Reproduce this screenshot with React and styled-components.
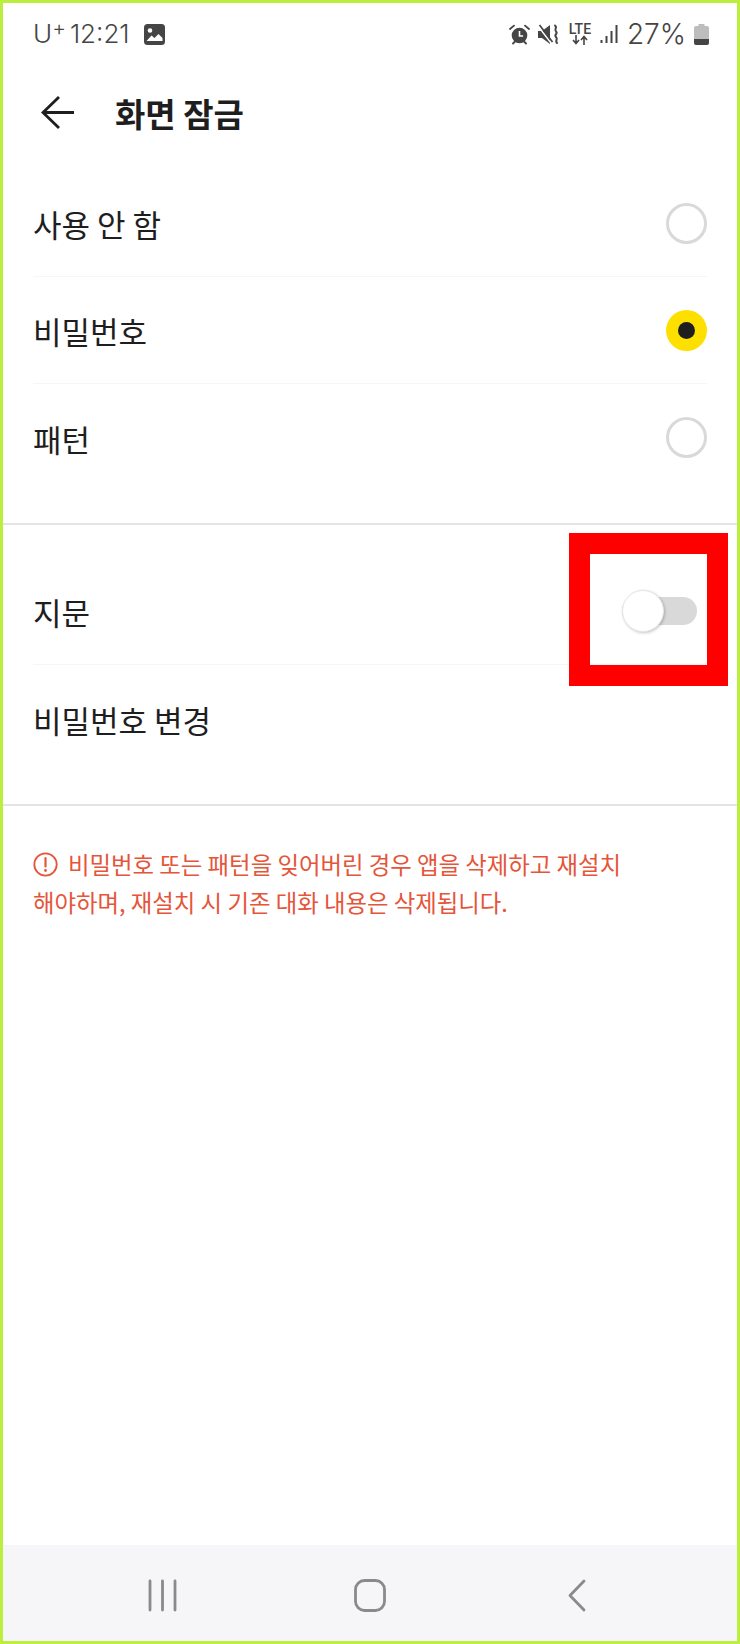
import React from 'react';
import styled, { createGlobalStyle } from 'styled-components';

const GlobalStyle = createGlobalStyle`
  html, body {
    margin: 0;
    padding: 0;
    background: #fff;
  }
  * {
    box-sizing: border-box;
  }
`;

const Screen = styled.div`
  position: relative;
  width: 740px;
  height: 1644px;
  display: flex;
  flex-direction: column;
  border: 3px solid #bbee3e;
  background: #fff;
  font-family: "Noto Sans CJK KR", "Noto Sans", sans-serif;
  color: #1e1e1e;
  overflow: hidden;
`;

const StatusBar = styled.div`
  height: 62px;
  padding: 0 28px 0 30px;
  display: flex;
  align-items: center;
  justify-content: space-between;
  font-family: Inter, Roboto, sans-serif;
  color: #454545;
`;

const StatusGroup = styled.div`
  display: flex;
  align-items: center;
  gap: ${(p) => p.$gap || 8}px;
`;

const StatusText = styled.span`
  font-size: ${(p) => p.$size || 26}px;
  font-weight: 300;
  line-height: 32px;
  white-space: nowrap;
`;

const Plus = styled.sup`
  font-size: 21px;
  line-height: 0;
  vertical-align: 8px;
  margin-right: 4px;
`;

const Header = styled.header`
  height: 105px;
  padding: 0 0 10px 38px;
  display: flex;
  align-items: center;
  gap: 40px;
`;

const Title = styled.h1`
  margin: 0;
  font-size: 33px;
  font-weight: 700;
  line-height: 40px;
`;

const Section = styled.section`
  padding: ${(p) => p.$top || 0}px 0 32px;
  border-bottom: 2px solid #e4e4e4;
`;

const Row = styled.div`
  height: 107px;
  margin: 0 30px;
  display: flex;
  align-items: center;
  justify-content: space-between;
  border-bottom: ${(p) => (p.$last ? '0' : '1px solid #f6f6f6')};
`;

const Label = styled.span`
  font-size: 31px;
  line-height: 40px;
  padding-top: 2px;
`;

const Radio = styled.span`
  width: 41px;
  height: 41px;
  border-radius: 50%;
  display: flex;
  align-items: center;
  justify-content: center;
  border: ${(p) => (p.$on ? '0' : '3px solid #d9d9d9')};
  background: ${(p) => (p.$on ? '#fde000' : '#fff')};
`;

const RadioDot = styled.span`
  width: 17px;
  height: 17px;
  border-radius: 50%;
  background: #1e1e1e;
`;

const Toggle = styled.span`
  position: relative;
  width: 75px;
  height: 28px;
  margin-right: 10px;
  border-radius: 14px;
  background: #d9d9d9;
  display: block;
`;

const Knob = styled.span`
  position: absolute;
  left: 0;
  top: -7px;
  width: 42px;
  height: 42px;
  border-radius: 50%;
  background: #fff;
  border: 1px solid #e6e6e6;
  box-shadow: 1px 1px 3px rgba(0, 0, 0, 0.22);
`;

const Highlight = styled.div`
  position: absolute;
  left: 566px;
  top: 530px;
  width: 159px;
  height: 153px;
  border: 21px solid #ff0000;
`;

const Warning = styled.p`
  margin: 0;
  padding: 39px 30px 0;
  font-size: 23.4px;
  line-height: 38px;
  color: #e5553a;
  flex: 1;
`;

const WarningIcon = styled.svg`
  width: 25px;
  height: 25px;
  margin-right: 10px;
  vertical-align: -3px;
`;

const NavBar = styled.nav`
  height: 96px;
  padding: 4px 56px 0;
  background: #f6f6f8;
  display: grid;
  grid-template-columns: repeat(3, 1fr);
  align-items: center;
  justify-items: center;
`;

function AlarmIcon() {
  return (
    <svg width="21" height="21" viewBox="0 0 21 21">
      <circle cx="10.5" cy="11.5" r="7.8" fill="#454545" />
      <path d="M10.5 7v5h3.6" fill="none" stroke="#fff" strokeWidth="1.6" />
      <path d="M1 5l4-3.4M20 5l-4-3.4M4 19.500l2-2M17 19.500l-2-2" stroke="#454545" strokeWidth="1.8" strokeLinecap="round" />
    </svg>
  );
}

function MuteIcon() {
  return (
    <svg width="22" height="21" viewBox="0 0 22 21">
      <path d="M0 7h4l8-6v19l-8-6H0z" fill="#454545" />
      <path d="M0 2l13 17" stroke="#fff" strokeWidth="1.400" />
      <path d="M1.500 1l13 17" stroke="#454545" strokeWidth="1.700" />
      <path d="M17 1.500c3 2.500-1.500 3.500 1 6s-2.500 3 0 5.500-1.500 3.500 1 6" fill="none" stroke="#454545" strokeWidth="2" strokeLinecap="round" />
    </svg>
  );
}

const LteBox = styled.span`
  width: 24px;
  display: flex;
  flex-direction: column;
  align-items: center;
  font-family: Roboto, sans-serif;
  font-size: 14px;
  font-weight: 500;
  line-height: 12px;
`;

function LteIcon() {
  return (
    <LteBox>
      LTE
      <svg width="18" height="10" viewBox="0 0 18 10">
        <path d="M5 0v8M2 5l3 3.500L8 5M13 10V2M10 5l3-3.500L16 5" fill="none" stroke="#454545" strokeWidth="1.600" />
      </svg>
    </LteBox>
  );
}

function SignalIcon() {
  return (
    <svg width="19" height="20" viewBox="0 0 19 20">
      <path d="M1.500 16v3M6.500 12v7M11.500 7v12M16.500 1v18" stroke="#454545" strokeWidth="2" />
    </svg>
  );
}

function BatteryIcon() {
  return (
    <svg width="15" height="21" viewBox="0 0 15 21">
      <path d="M4.500 0h6v2h2.500a2 2 0 0 1 2 2v11H0V4a2 2 0 0 1 2-2h2.500z" fill="#bdbdbd" />
      <path d="M0 15h15v4a2 2 0 0 1-2 2H2a2 2 0 0 1-2-2z" fill="#454545" />
    </svg>
  );
}

function ImageIcon() {
  return (
    <svg width="21" height="21" viewBox="0 0 21 21">
      <rect width="21" height="21" rx="3.500" fill="#454545" />
      <circle cx="6" cy="6.500" r="2.300" fill="#fff" />
      <path d="M2.500 17l5-5.500 3 2.500 4-4 4 4v3z" fill="#fff" />
    </svg>
  );
}

function BackArrow() {
  return (
    <svg width="34" height="33" viewBox="0 0 34 33">
      <path d="M33 16.500H2M18 1L2 16.500 18 32" fill="none" stroke="#1e1e1e" strokeWidth="2.800" />
    </svg>
  );
}

function RecentsIcon() {
  return (
    <svg width="29" height="33" viewBox="0 0 29 33">
      <path d="M2 2v29M14.500 2v29M27 2v29" stroke="#8a8a8a" strokeWidth="2.800" strokeLinecap="round" />
    </svg>
  );
}

function HomeIcon() {
  return (
    <svg width="32" height="33" viewBox="0 0 32 33">
      <rect x="1.500" y="1.500" width="29" height="30" rx="9" fill="none" stroke="#8a8a8a" strokeWidth="2.800" />
    </svg>
  );
}

function NavBackIcon() {
  return (
    <svg width="18" height="33" viewBox="0 0 18 33">
      <path d="M16 2L2 16.500 16 31" fill="none" stroke="#8a8a8a" strokeWidth="2.800" strokeLinecap="round" strokeLinejoin="round" />
    </svg>
  );
}

function App() {
  return (
    <Screen>
      <GlobalStyle />
      <StatusBar>
        <StatusGroup $gap={14}>
          <StatusText>
            U<Plus>+</Plus>12:21
          </StatusText>
          <ImageIcon />
        </StatusGroup>
        <StatusGroup>
          <AlarmIcon />
          <MuteIcon />
          <LteIcon />
          <SignalIcon />
          <StatusText $size={28}>27%</StatusText>
          <BatteryIcon />
        </StatusGroup>
      </StatusBar>

      <Header>
        <BackArrow />
        <Title>화면 잠금</Title>
      </Header>

      <Section>
        <Row>
          <Label>사용 안 함</Label>
          <Radio />
        </Row>
        <Row>
          <Label>비밀번호</Label>
          <Radio $on>
            <RadioDot />
          </Radio>
        </Row>
        <Row $last>
          <Label>패턴</Label>
          <Radio />
        </Row>
      </Section>

      <Section $top={33}>
        <Row>
          <Label>지문</Label>
          <Toggle>
            <Knob />
          </Toggle>
        </Row>
        <Row $last>
          <Label>비밀번호 변경</Label>
        </Row>
      </Section>

      <Warning>
        <WarningIcon viewBox="0 0 25 25">
          <circle cx="12.500" cy="12.500" r="11.200" fill="none" stroke="#e5553a" strokeWidth="1.800" />
          <path d="M12.500 6v8.500" stroke="#e5553a" strokeWidth="2.200" strokeLinecap="round" />
          <circle cx="12.500" cy="18.500" r="1.400" fill="#e5553a" />
        </WarningIcon>
        비밀번호 또는 패턴을 잊어버린 경우 앱을 삭제하고 재설치
        <br />
        해야하며, 재설치 시 기존 대화 내용은 삭제됩니다.
      </Warning>

      <NavBar>
        <RecentsIcon />
        <HomeIcon />
        <NavBackIcon />
      </NavBar>

      <Highlight />
    </Screen>
  );
}

export default App;
